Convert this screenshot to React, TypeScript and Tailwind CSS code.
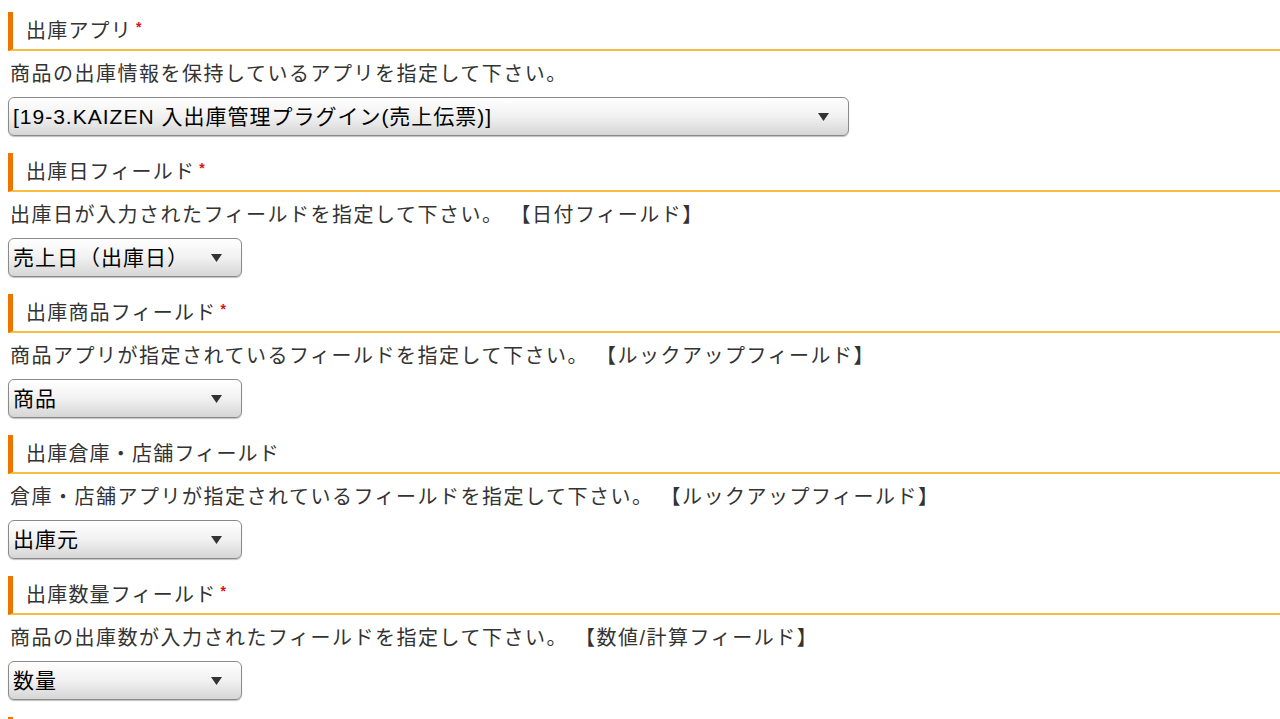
const font = { fontFamily: '"Liberation Sans", "Noto Sans CJK JP", sans-serif' };

type Field = {
  label: string;
  required: boolean;
  description: string;
  value: string;
  wide?: boolean;
};

const fields: Field[] = [
  {
    label: "出庫アプリ",
    required: true,
    description: "商品の出庫情報を保持しているアプリを指定して下さい。",
    value: "[19-3.KAIZEN 入出庫管理プラグイン(売上伝票)]",
    wide: true,
  },
  {
    label: "出庫日フィールド",
    required: true,
    description: "出庫日が入力されたフィールドを指定して下さい。 【日付フィールド】",
    value: "売上日（出庫日）",
  },
  {
    label: "出庫商品フィールド",
    required: true,
    description: "商品アプリが指定されているフィールドを指定して下さい。 【ルックアップフィールド】",
    value: "商品",
  },
  {
    label: "出庫倉庫・店舗フィールド",
    required: false,
    description: "倉庫・店舗アプリが指定されているフィールドを指定して下さい。 【ルックアップフィールド】",
    value: "出庫元",
  },
  {
    label: "出庫数量フィールド",
    required: true,
    description: "商品の出庫数が入力されたフィールドを指定して下さい。 【数値/計算フィールド】",
    value: "数量",
  },
];

function SelectBox({ value, wide }: { value: string; wide?: boolean }) {
  return (
    <div
      className={`${wide ? "w-[841px]" : "w-[234px]"} h-[39px] flex items-center justify-between pl-[4px] pr-[19px] rounded-[6px] border-[1.5px] border-[#8a8a8a] bg-gradient-to-b from-[#ffffff] via-[#f1f1f1] to-[#d6d6d6] shadow-[0_1px_1px_rgba(0,0,0,0.25)]`}
    >
      <span className="text-[21px] tracking-[1px] leading-none text-black whitespace-nowrap">{value}</span>
      <svg width="11" height="8" viewBox="0 0 11 8" className="shrink-0">
        <path d="M0 0 L11 0 L5.5 8 Z" fill="#333" />
      </svg>
    </div>
  );
}

function FieldSection({ field }: { field: Field }) {
  return (
    <div className="pb-[17px]">
      <div className="h-[39px] flex items-center border-l-[5px] border-l-[#ec7500] border-b-2 border-b-[#f9bd3f] pl-[13px]">
        <span className="text-[20px] tracking-[1.2px] text-[#333]">{field.label}</span>
        {field.required && (
          <span className="ml-[4px] mb-[8px] text-[14px] font-bold text-[#e01010] leading-none">*</span>
        )}
      </div>
      <div className="mt-[11px] h-[24px] flex items-center pl-[2px] text-[20px] tracking-[1.5px] text-[#333] whitespace-nowrap">
        {field.description}
      </div>
      <div className="mt-[11px]">
        <SelectBox value={field.value} wide={field.wide} />
      </div>
    </div>
  );
}

export default function App() {
  return (
    <div className="w-[1280px] h-[719px] overflow-hidden bg-white pl-[8px] pt-[12px]" style={font}>
      {fields.map((field) => (
        <FieldSection key={field.label} field={field} />
      ))}
      <div className="h-[39px] border-l-[5px] border-l-[#ec7500]" />
    </div>
  );
}
